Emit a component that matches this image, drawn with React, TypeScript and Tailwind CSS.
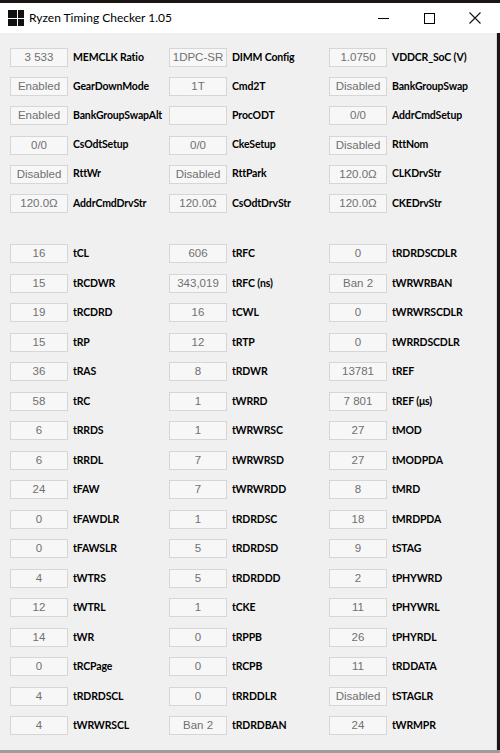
import React from "react";

type Field = [string, string];

const top: Field[][] = [
  [["3 533", "MEMCLK Ratio"], ["1DPC-SR", "DIMM Config"], ["1.0750", "VDDCR_SoC (V)"]],
  [["Enabled", "GearDownMode"], ["1T", "Cmd2T"], ["Disabled", "BankGroupSwap"]],
  [["Enabled", "BankGroupSwapAlt"], ["", "ProcODT"], ["0/0", "AddrCmdSetup"]],
  [["0/0", "CsOdtSetup"], ["0/0", "CkeSetup"], ["Disabled", "RttNom"]],
  [["Disabled", "RttWr"], ["Disabled", "RttPark"], ["120.0Ω", "CLKDrvStr"]],
  [["120.0Ω", "AddrCmdDrvStr"], ["120.0Ω", "CsOdtDrvStr"], ["120.0Ω", "CKEDrvStr"]],
];

const timings: Field[][] = [
  [["16", "tCL"], ["606", "tRFC"], ["0", "tRDRDSCDLR"]],
  [["15", "tRCDWR"], ["343,019", "tRFC (ns)"], ["Ban 2", "tWRWRBAN"]],
  [["19", "tRCDRD"], ["16", "tCWL"], ["0", "tWRWRSCDLR"]],
  [["15", "tRP"], ["12", "tRTP"], ["0", "tWRRDSCDLR"]],
  [["36", "tRAS"], ["8", "tRDWR"], ["13781", "tREF"]],
  [["58", "tRC"], ["1", "tWRRD"], ["7 801", "tREF (μs)"]],
  [["6", "tRRDS"], ["1", "tWRWRSC"], ["27", "tMOD"]],
  [["6", "tRRDL"], ["7", "tWRWRSD"], ["27", "tMODPDA"]],
  [["24", "tFAW"], ["7", "tWRWRDD"], ["8", "tMRD"]],
  [["0", "tFAWDLR"], ["1", "tRDRDSC"], ["18", "tMRDPDA"]],
  [["0", "tFAWSLR"], ["5", "tRDRDSD"], ["9", "tSTAG"]],
  [["4", "tWTRS"], ["5", "tRDRDDD"], ["2", "tPHYWRD"]],
  [["12", "tWTRL"], ["1", "tCKE"], ["11", "tPHYWRL"]],
  [["14", "tWR"], ["0", "tRPPB"], ["26", "tPHYRDL"]],
  [["0", "tRCPage"], ["0", "tRCPB"], ["11", "tRDDATA"]],
  [["4", "tRDRDSCL"], ["0", "tRRDDLR"], ["Disabled", "tSTAGLR"]],
  [["4", "tWRWRSCL"], ["Ban 2", "tRDRDBAN"], ["24", "tWRMPR"]],
];

const Cell: React.FC<{ field: Field }> = ({ field }) => (
  <div className="flex items-center">
    <div className="shrink-0 w-[58px] h-[19px] border border-[#d6d6d6] bg-[#f7f7f7] flex items-center justify-center text-[11.5px] text-[#707070] font-['Liberation_Sans',sans-serif]">
      {field[0]}
    </div>
    <span className="ml-[5px] text-[10.5px] tracking-[-0.15px] font-bold text-black font-['Lato',sans-serif] whitespace-nowrap">
      {field[1]}
    </span>
  </div>
);

const Rows: React.FC<{ rows: Field[][]; h: string }> = ({ rows, h }) => (
  <div>
    {rows.map((r, i) => (
      <div key={i} className={`grid grid-cols-[159px_160px_1fr] items-center ${h}`}>
        {r.map((f, j) => (
          <Cell key={j} field={f} />
        ))}
      </div>
    ))}
  </div>
);

export default function App() {
  return (
    <div className="w-[500px] h-[753px] bg-[#1b1614] flex flex-col overflow-hidden">
      <div className="h-[3px] shrink-0" />
      {/* Title bar */}
      <div className="h-[30px] shrink-0 bg-white flex items-center">
        <svg width="16" height="16" viewBox="0 0 16 16" className="ml-[8px]">
          <rect x="0" y="0" width="9" height="8" fill="#111" />
          <rect x="10" y="0" width="6" height="8" fill="#111" />
          <rect x="0" y="9" width="9" height="7" fill="#111" />
          <rect x="10" y="9" width="6" height="7" fill="#111" />
        </svg>
        <span className="ml-[5px] text-[12px] text-black font-['Lato',sans-serif]">
          Ryzen Timing Checker 1.05
        </span>
        <div className="ml-auto flex items-center">
          <div className="w-[46px] h-[30px] flex items-center justify-center">
            <div className="w-[11px] h-[1px] bg-black" />
          </div>
          <div className="w-[46px] h-[30px] flex items-center justify-center">
            <div className="w-[11px] h-[11px] border border-black" />
          </div>
          <div className="w-[46px] h-[30px] flex items-center justify-center mr-[2px]">
            <svg width="12" height="12" viewBox="0 0 12 12">
              <path d="M0.5 0.5 L11.5 11.5 M11.5 0.5 L0.5 11.5" stroke="#111" strokeWidth="1.1" />
            </svg>
          </div>
        </div>
      </div>
      {/* Content */}
      <div className="flex-1 flex">
        <div className="w-[497px] bg-[#f0f0f0] border-r border-[#d8d8d8] pl-[10px] pt-[10px]">
          <Rows rows={top} h="h-[29.2px]" />
          <div className="h-[21px]" />
          <Rows rows={timings} h="h-[29.5px]" />
        </div>
      </div>
      <div className="h-[3px] shrink-0 bg-[#9c9c9c]" />
    </div>
  );
}
